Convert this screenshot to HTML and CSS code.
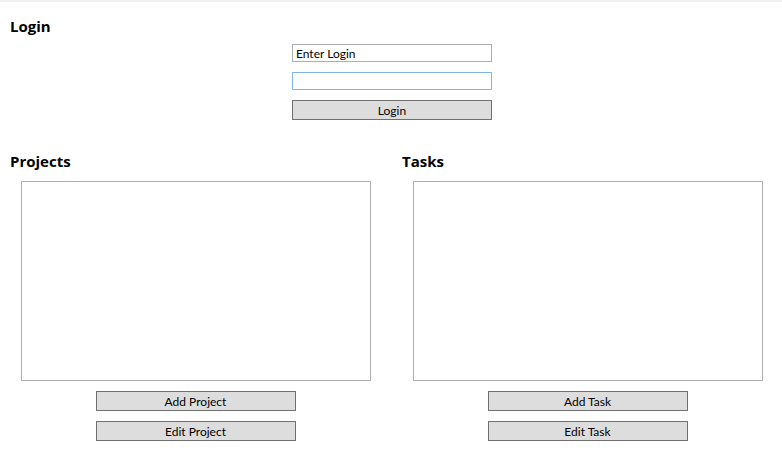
FILE: index.html
```html
<!DOCTYPE html>
<html>
<head>
<meta charset="utf-8">
<link rel="stylesheet" href="styles.css">
</head>
<body>
<div class="topbar"></div>
<section class="login">
  <h2 class="heading">Login</h2>
  <div class="login-form">
    <input class="field" type="text" value="Enter Login">
    <input class="field field-focus" type="password" value="">
    <button class="btn">Login</button>
  </div>
</section>
<section class="panels">
  <div class="panel">
    <h2 class="heading">Projects</h2>
    <div class="listbox"></div>
    <div class="actions">
      <button class="btn">Add Project</button>
      <button class="btn">Edit Project</button>
    </div>
  </div>
  <div class="panel panel-right">
    <h2 class="heading">Tasks</h2>
    <div class="listbox"></div>
    <div class="actions">
      <button class="btn">Add Task</button>
      <button class="btn">Edit Task</button>
    </div>
  </div>
</section>
</body>
</html>
```
FILE: styles.css
```css
* { box-sizing: border-box; }
html, body {
  margin: 0;
  padding: 0;
  background: #ffffff;
  font-family: Lato, "Open Sans", "Noto Sans", sans-serif;
  font-size: 12px;
  color: #000;
}
.topbar {
  height: 2px;
  background: #f0f0f0;
}
.heading {
  margin: 0;
  font-family: "Open Sans", "Noto Sans", sans-serif;
  font-size: 15px;
  font-weight: 700;
  line-height: 20px;
  color: #000;
}
.login {
  padding-top: 14px;
}
.login .heading {
  padding-left: 10px;
}
.login-form {
  width: 200px;
  margin: 8px 0 0 calc(50% - 99px);
  display: flex;
  flex-direction: column;
  gap: 10px;
}
.field {
  display: block;
  width: 200px;
  height: 18px;
  margin: 0;
  padding: 0 3px;
  border: 1px solid #abadb3;
  background: #fff;
  font-family: inherit;
  font-size: 12px;
  color: #000;
  outline: none;
}
.field-focus {
  border-color: #7eb4ea;
}
.btn {
  display: block;
  width: 200px;
  height: 20px;
  margin: 0;
  padding: 1px 0 0;
  border: 1px solid #707070;
  background: #dddddd;
  font-family: inherit;
  font-size: 12px;
  color: #000;
  line-height: 17px;
}
.panels {
  display: grid;
  grid-template-columns: 391px 391px;
  padding-top: 31px;
}
.panel .heading {
  padding-left: 10px;
}
.panel-right .heading {
  padding-left: 11px;
}
.listbox {
  margin: 10px 0 0 21px;
  width: 350px;
  height: 200px;
  border: 1px solid #acacac;
  background: #fff;
}
.panel-right .listbox {
  margin-left: 22px;
}
.actions {
  display: flex;
  flex-direction: column;
  align-items: center;
  gap: 10px;
  margin-top: 10px;
}
.panel-right .actions {
  padding-left: 2px;
}
```
